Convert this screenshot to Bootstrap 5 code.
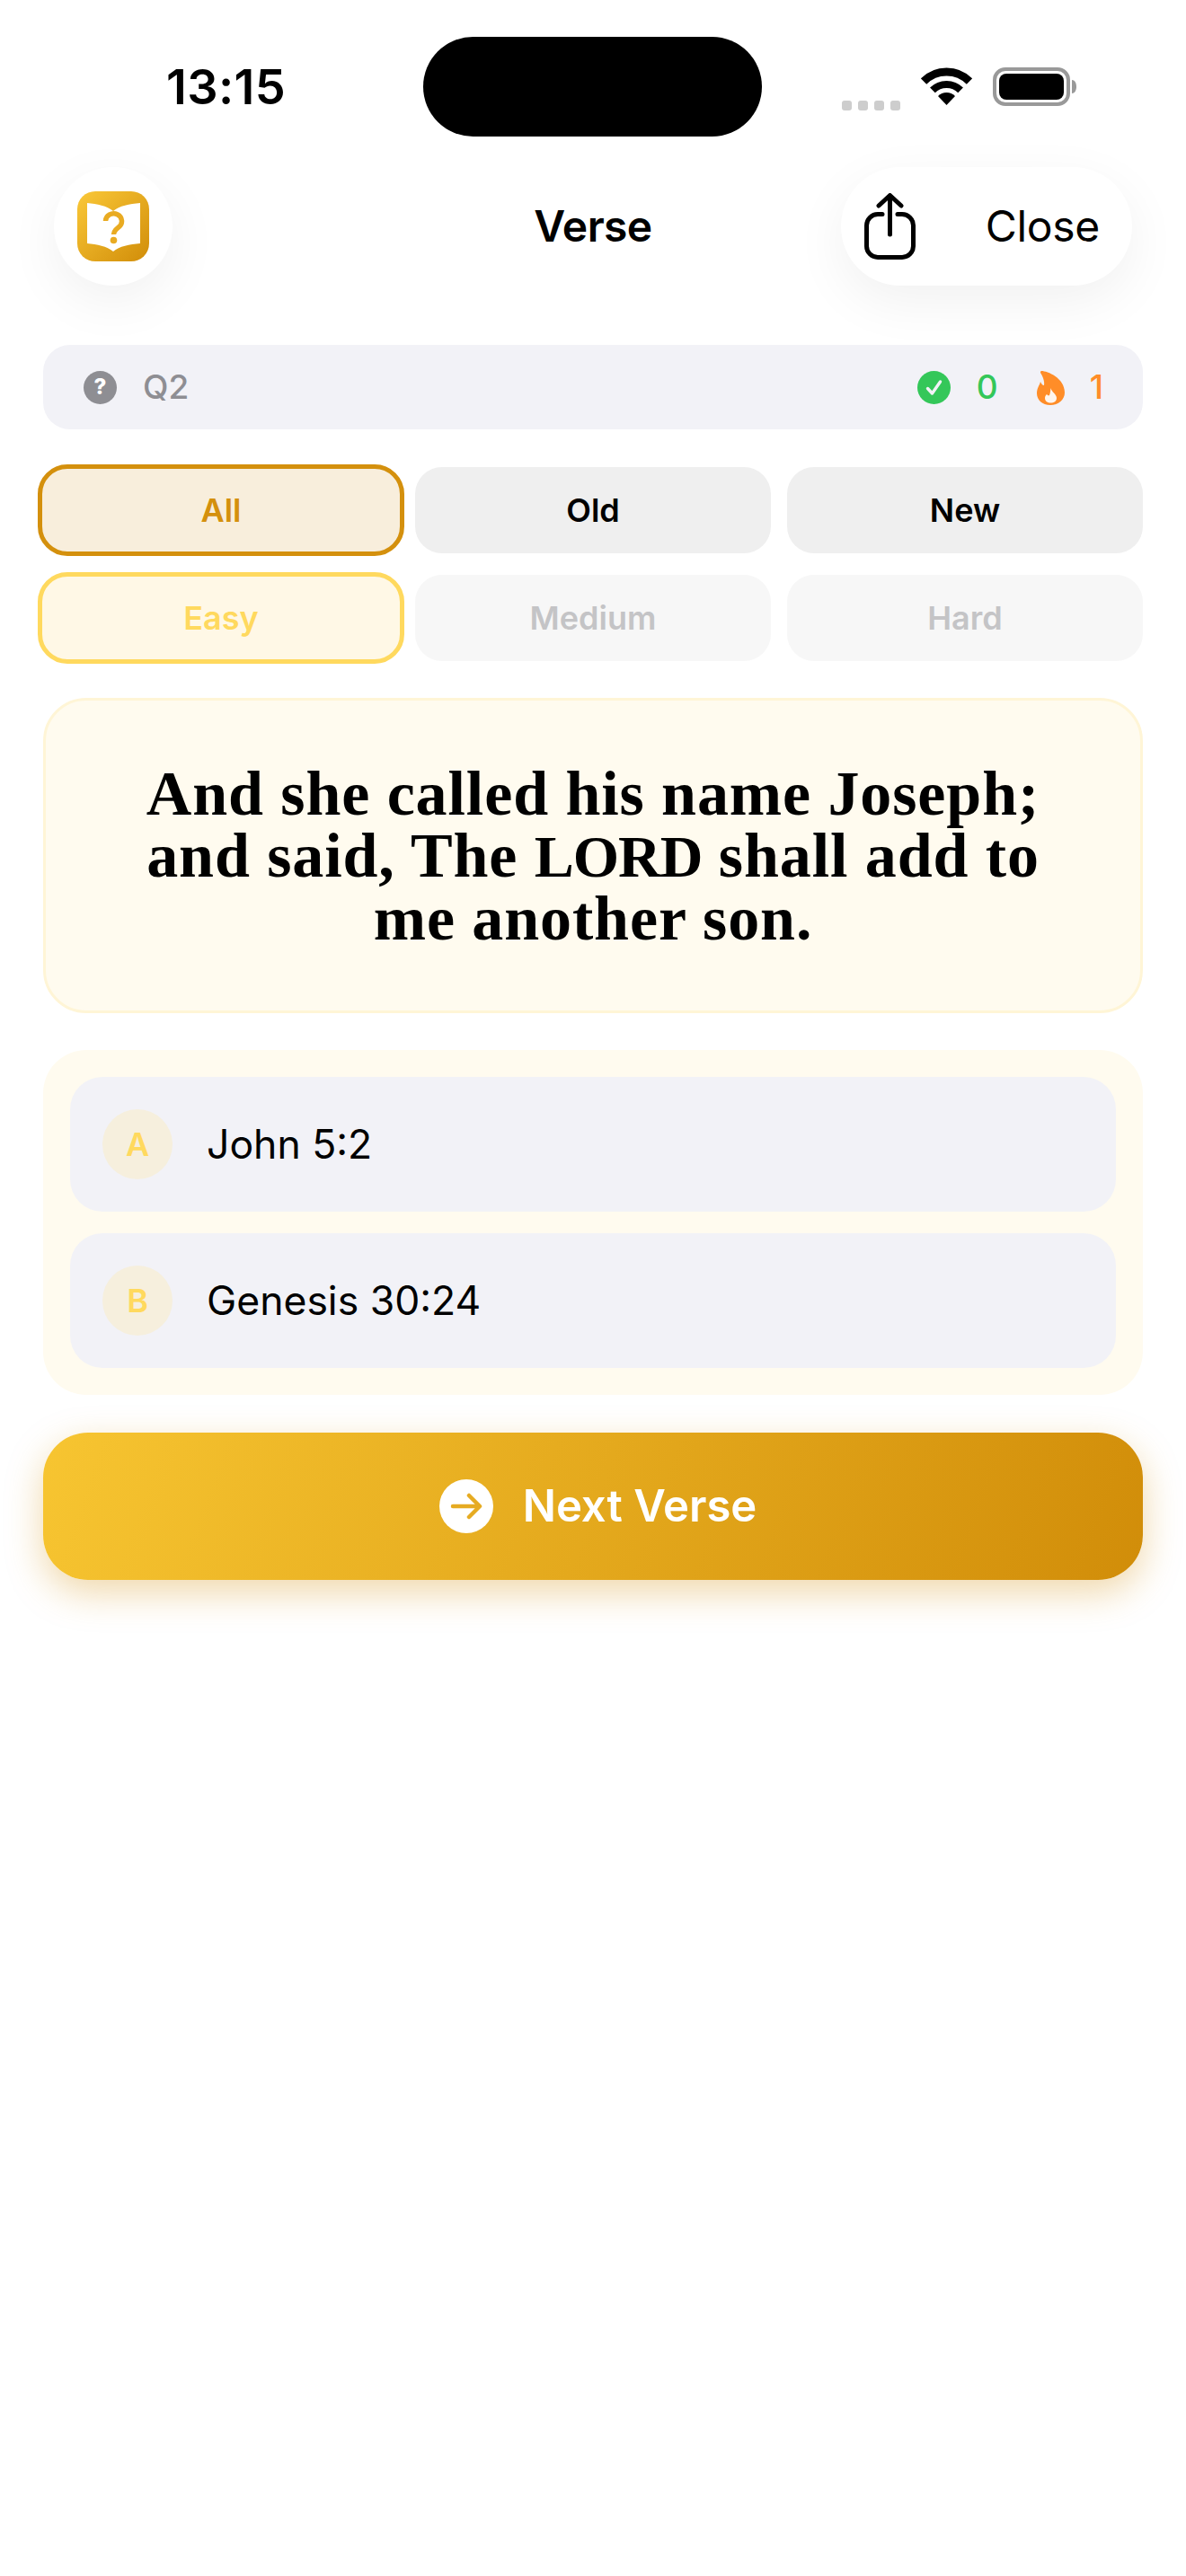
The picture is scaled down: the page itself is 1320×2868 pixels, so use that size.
<!DOCTYPE html>
<html lang="en">
<head>
    <meta charset="UTF-8">
    <meta name="viewport" content="width=device-width, initial-scale=1.0">
    <title>Verse</title>
    <link href="https://cdn.jsdelivr.net/npm/bootstrap@5.3.0/dist/css/bootstrap.min.css" rel="stylesheet">
    <style>
        body {
            background: #fff;
            color: #000;
            font-family: Inter, "Liberation Sans", sans-serif;
        }
        .phone-page { width: 1320px; min-height: 2868px; }

        /* status bar */
        .status-row { height: 186px; padding-top: 41px; }
        .clock-cell { width: 471px; padding-left: 185px; height: 111px; font-size: 54px; font-weight: 600; letter-spacing: .4px; }
        .island { width: 377px; height: 111px; background: #000; border-radius: 56px; }
        .status-icons { margin-left: 89px; height: 111px; }
        .sig-dots { gap: 7px; margin-top: 42px; margin-right: 23px; }
        .sig-dots i { display: block; width: 11px; height: 11px; border-radius: 3px; background: #cdcdcd; }
        .wifi-ico { margin-right: 23px; margin-top: -1px; }
        .batt-ico { margin-top: -1px; }

        /* header */
        .top-bar { display: grid; grid-template-columns: 1fr auto 1fr; align-items: center; padding: 0 60px; height: 132px; position: relative; z-index: 2; }
        .glass-btn { background: #fff; height: 132px; box-shadow: 0 18px 60px rgba(0, 0, 0, .06); }
        .logo-btn { width: 132px; }
        .close-pill { width: 324px; border-radius: 66px; padding: 0 36px 0 26px; }
        .top-title { font-size: 48px; font-weight: 600; letter-spacing: -.6px; }
        .close-label { font-size: 48px; font-weight: 400; letter-spacing: -.3px; }

        /* stats */
        .stat-strip { margin: 66px 48px 0; height: 94px; background: #f2f2f7; border-radius: 30px; padding: 0 44px 0 45px; font-size: 37px; font-weight: 500; }
        .q-dot { width: 37px; height: 37px; background: #8e8e93; color: #fff; font-size: 24px; font-weight: 800; }
        .q-label { color: #8e8e93; margin-left: 29px; }
        .n-green { color: #34c759; margin-left: 29px; }
        .n-orange { color: #ff8d28; margin-left: 28px; }
        .flame-ico { margin-left: 43px; }

        /* filter chips */
        .chip-grid { display: grid; grid-template-columns: repeat(3, 1fr); gap: 24px 18px; margin: 42px 48px 0; }
        .chip { height: 96px; border-radius: 30px; font-size: 36px; font-weight: 600; display: flex; align-items: center; justify-content: center; border: 0; padding: 0; }
        .chip-plain { background: #efefef; color: #000; }
        .chip-dim { background: #f7f7f7; color: #c4c4c6; }
        .chip-on { height: 102px; margin: -3px -6px; border-style: solid; border-width: 5px; border-radius: 33px; }
        .chip-all { background: #f8eedc; border-color: #d4900d; color: #d4900d; }
        .chip-easy { background: #fff8e6; border-color: #ffd95e; color: #ffd95e; }

        /* verse card */
        .verse-box { margin: 41px 48px 0; height: 351px; background: #fffbef; border: 3px solid #fff5d6; border-radius: 48px; font-family: "Liberation Serif", serif; font-weight: 700; font-size: 70px; line-height: 69px; letter-spacing: .9px; }
        .lord-word { font-size: 66px; letter-spacing: -1px; }

        /* answers */
        .answer-box { margin: 41px 48px 0; padding: 30px; background: #fffbef; border-radius: 48px; gap: 24px; }
        .answer-row { height: 150px; background: #f2f2f7; border-radius: 36px; padding-left: 36px; font-size: 44.5px; }
        .answer-badge { width: 78px; height: 78px; background: #f6efdd; color: #ffd95e; font-size: 36px; font-weight: 600; margin-right: 38px; }

        /* next button */
        .next-btn { margin: 42px 48px 0; width: 1224px; height: 164px; border: 0; border-radius: 50px; padding: 0 0 0 11px; background: linear-gradient(110deg, #f7c531, #d18d09); color: #fff; font-size: 49px; font-weight: 600; box-shadow: 0 14px 40px rgba(212, 144, 13, .35); gap: 33px; }
        .next-btn:hover, .next-btn:active { color: #fff; background: linear-gradient(110deg, #f7c531, #d18d09); }
    </style>
</head>
<body>
    <div class="phone-page">
        <div class="status-row d-flex">
            <div class="clock-cell d-flex align-items-center">13:15</div>
            <div class="island"></div>
            <div class="status-icons d-flex align-items-center">
                <div class="sig-dots d-flex"><i></i><i></i><i></i><i></i></div>
                <svg class="wifi-ico" width="57" height="42" viewBox="0 0 57 42">
                    <path d="M3 15.5A36 36 0 0 1 54 15.5" fill="none" stroke="#000" stroke-width="9"/>
                    <path d="M12.9 25.4A22 22 0 0 1 44.1 25.4" fill="none" stroke="#000" stroke-width="8"/>
                    <path d="M28.5 42L19 32A13.4 13.4 0 0 1 38 32Z" fill="#000"/>
                </svg>
                <svg class="batt-ico" width="93" height="43" viewBox="0 0 93 43">
                    <rect x="2" y="2" width="82" height="39" rx="12" fill="none" stroke="#999" stroke-width="4"/>
                    <rect x="7" y="7" width="72" height="29" rx="8" fill="#000"/>
                    <path d="M88 14c3 0 5 3 5 7.5s-2 7.5-5 7.5z" fill="#999"/>
                </svg>
            </div>
        </div>

        <div class="top-bar">
            <div>
                <div class="glass-btn logo-btn rounded-circle d-flex align-items-center justify-content-center">
                    <svg width="80" height="78" viewBox="0 0 80 78">
                        <defs>
                            <linearGradient id="logoFill" x1="0" y1="0" x2="1" y2="1">
                                <stop offset="0" stop-color="#fac838"/>
                                <stop offset="1" stop-color="#d18d09"/>
                            </linearGradient>
                        </defs>
                        <rect width="80" height="78" rx="20" fill="url(#logoFill)"/>
                        <path d="M11 13C22 14 33 16 40 22C47 16 58 14 70 13V58C58 59 47 61 40 67C33 61 22 59 11 58Z" fill="#fff"/>
                        <path d="M31.5 33a9 8.5 0 1 1 14.5 7c-3 2.5-5.5 4-5.5 8" fill="none" stroke="#e9ab22" stroke-width="5.5"/>
                        <circle cx="40.5" cy="54.5" r="3.8" fill="#e9ab22"/>
                    </svg>
                </div>
            </div>
            <div class="top-title">Verse</div>
            <div class="d-flex justify-content-end">
                <div class="glass-btn close-pill d-flex align-items-center justify-content-between">
                    <svg width="58" height="74" viewBox="0 0 58 74" fill="none" stroke="#000" stroke-width="5" stroke-linecap="round" stroke-linejoin="round">
                        <path d="M20 23.5H15A12.5 12.5 0 0 0 2.5 36V59A12.5 12.5 0 0 0 15 71.5H42A12.5 12.5 0 0 0 54.5 59V36A12.5 12.5 0 0 0 42 23.5H37"/>
                        <path d="M28.5 46V3M16 14L28.5 2.5L41 14"/>
                    </svg>
                    <span class="close-label">Close</span>
                </div>
            </div>
        </div>

        <div class="stat-strip d-flex align-items-center">
            <span class="q-dot rounded-circle d-flex align-items-center justify-content-center">?</span>
            <span class="q-label">Q2</span>
            <svg class="ms-auto" width="37" height="37" viewBox="0 0 37 37">
                <circle cx="18.5" cy="18.5" r="18.5" fill="#34c759"/>
                <path d="M11.5 19.5L16.5 25L25.5 12" fill="none" stroke="#f2f2f7" stroke-width="3.4" stroke-linecap="round" stroke-linejoin="round"/>
            </svg>
            <span class="n-green">0</span>
            <svg class="flame-ico" width="31" height="39" viewBox="0 0 31 39">
                <path d="M5 1C12 1 31 9 31 25C31 33 24 39 15 39C6 39 0 33 0 26C0 20 3 17 4 13C5 15 6 17 8 17C9 12 6 6 4 3C4 2 4 1 5 1Z" fill="#ff8d28"/>
                <path d="M15.5 20C16 24 22 27 22 31C22 35 19 36.5 15.5 36.5C12 36.5 9 35 9 31C9 29 10 28 11 27C12 28 13 29 14 28C15 26 15 23 15.5 20Z" fill="#fff" fill-opacity=".92"/>
            </svg>
            <span class="n-orange">1</span>
        </div>

        <div class="chip-grid">
            <button class="btn chip chip-on chip-all">All</button>
            <button class="btn chip chip-plain">Old</button>
            <button class="btn chip chip-plain">New</button>
            <button class="btn chip chip-on chip-easy">Easy</button>
            <button class="btn chip chip-dim">Medium</button>
            <button class="btn chip chip-dim">Hard</button>
        </div>

        <div class="verse-box d-flex align-items-center justify-content-center text-center">
            <div>And she called his name Joseph;<br>and said, The <span class="lord-word">LORD</span> shall add to<br>me another son.</div>
        </div>

        <div class="answer-box d-flex flex-column">
            <div class="answer-row d-flex align-items-center">
                <span class="answer-badge rounded-circle d-flex align-items-center justify-content-center">A</span>
                <span>John 5:2</span>
            </div>
            <div class="answer-row d-flex align-items-center">
                <span class="answer-badge rounded-circle d-flex align-items-center justify-content-center">B</span>
                <span>Genesis 30:24</span>
            </div>
        </div>

        <button class="btn next-btn d-flex align-items-center justify-content-center">
            <svg width="60" height="60" viewBox="0 0 60 60">
                <circle cx="30" cy="30" r="30" fill="#fff"/>
                <path d="M15 30H44M33 18L45 30L33 42" fill="none" stroke="#e6ab22" stroke-width="4.5" stroke-linecap="round" stroke-linejoin="round"/>
            </svg>
            <span>Next Verse</span>
        </button>
    </div>
    <script src="https://cdn.jsdelivr.net/npm/bootstrap@5.3.0/dist/js/bootstrap.bundle.min.js"></script>
</body>
</html>
